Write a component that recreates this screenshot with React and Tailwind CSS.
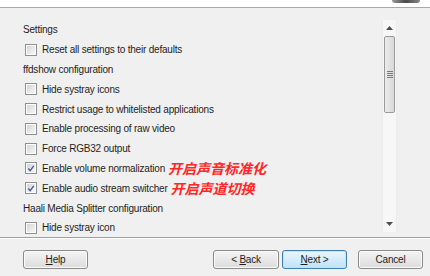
import React from 'react';

const rows = [
    { type: 'header', label: 'Settings' },
    { type: 'check', label: 'Reset all settings to their defaults' },
    { type: 'header', label: 'ffdshow configuration' },
    { type: 'check', label: 'Hide systray icons' },
    { type: 'check', label: 'Restrict usage to whitelisted applications' },
    { type: 'check', label: 'Enable processing of raw video' },
    { type: 'check', label: 'Force RGB32 output' },
    { type: 'check', label: 'Enable volume normalization', checked: true, note: '开启声音标准化' },
    { type: 'check', label: 'Enable audio stream switcher', checked: true, note: '开启声道切换' },
    { type: 'header', label: 'Haali Media Splitter configuration' },
    { type: 'check', label: 'Hide systray icon' },
];

const CheckBox = ({ checked }) => (
    <span className="w-[12px] h-[12px] border border-[#8e8f8f] bg-white p-px shrink-0">
        <span className="flex w-full h-full items-center justify-center bg-gradient-to-br from-[#d6d6d6] to-[#f6f6f6]">
            {checked && (
                <svg width="9" height="9" viewBox="0 0 9 9">
                    <path d="M1.5 4.5 L3.6 7 L7.6 1.6" fill="none" stroke="#4a5f97" strokeWidth="1.6" />
                </svg>
            )}
        </span>
    </span>
);

const Button = ({ children, primary, className = '' }) => (
    <button
        className={`h-[19px] rounded-[3px] border text-[10px] tracking-[-0.2px] text-[#1e1e1e] flex items-center justify-center ${
            primary
                ? 'border-[#3c7fb1] bg-gradient-to-b from-[#eaf6fd] to-[#bfe2f7] shadow-[inset_0_0_0_1px_#c4e5f6]'
                : 'border-[#8a8a8a] bg-gradient-to-b from-[#f4f4f4] to-[#dcdcdc] shadow-[inset_0_0_0_1px_#fbfbfb]'
        } ${className}`}
    >
        {children}
    </button>
);

const ScrollBar = () => (
    <div className="mt-[12px] mr-[33px] w-[15px] h-[212px] flex flex-col bg-[#f7f7f7] border-x border-[#ececec]">
        <div className="h-[16px] flex items-center justify-center">
            <svg width="7" height="4" viewBox="0 0 7 4"><path d="M0 4 L3.5 0 L7 4 Z" fill="#4d4d4d" /></svg>
        </div>
        <div className="h-[77px] mx-px rounded-[2px] border border-[#9a9a9a] bg-gradient-to-r from-[#ececec] to-[#d8d8d8] flex flex-col items-center justify-center gap-px">
            <span className="w-[6px] h-px bg-[#7a7a7a]" />
            <span className="w-[6px] h-px bg-[#7a7a7a]" />
            <span className="w-[6px] h-px bg-[#7a7a7a]" />
            <span className="w-[6px] h-px bg-[#7a7a7a]" />
        </div>
        <div className="flex-1" />
        <div className="h-[16px] flex items-center justify-center">
            <svg width="7" height="4" viewBox="0 0 7 4"><path d="M0 0 L3.5 4 L7 0 Z" fill="#4d4d4d" /></svg>
        </div>
    </div>
);

export default function App() {
    return (
        <div className="w-[430px] h-[276px] bg-[#f0f0f0] flex flex-col overflow-hidden text-[#1e1e1e]"
            style={{ fontFamily: '"Liberation Sans", Arial, sans-serif' }}>
            {/* Top strip */}
            <div className="h-[8px] bg-white border-b border-[#a8a8a8] flex justify-end shrink-0">
                <span className="w-[28px] h-[3px] mr-[10px] rounded-b-full bg-gradient-to-r from-[#9a9a9a] via-[#4a4a4a] to-[#8a8a8a]" />
            </div>

            {/* Options list */}
            <div className="h-[229px] flex shrink-0 overflow-hidden">
                <div className="flex-1 pl-[23px] pt-[12px] text-[10px] tracking-[-0.2px]">
                    {rows.map((r, i) =>
                        r.type === 'header' ? (
                            <div key={i} className="h-[19.8px] flex items-center">{r.label}</div>
                        ) : (
                            <div key={i} className="h-[19.8px] flex items-center pl-[2px] gap-[5px]">
                                <CheckBox checked={r.checked} />
                                <span>{r.label}</span>
                                {r.note && (
                                    <span className="-ml-[2px] text-[14px] font-bold italic tracking-normal text-[#ff2626] leading-none"
                                        style={{ fontFamily: '"Noto Sans CJK SC", sans-serif' }}>
                                        {r.note}
                                    </span>
                                )}
                            </div>
                        )
                    )}
                </div>
                <ScrollBar />
            </div>

            {/* Separator */}
            <div className="h-px bg-[#a0a0a0] shrink-0" />
            <div className="h-px bg-white shrink-0" />

            {/* Buttons */}
            <div className="flex items-start pt-[11px] pl-[23px]">
                <Button className="w-[65px]"><span><u>H</u>elp</span></Button>
                <Button className="w-[66px] ml-[125px]"><span>&lt; <u>B</u>ack</span></Button>
                <Button primary className="w-[65px] ml-[3px]"><span><u>N</u>ext &gt;</span></Button>
                <Button className="w-[65px] ml-[11px]">Cancel</Button>
            </div>
        </div>
    );
}
